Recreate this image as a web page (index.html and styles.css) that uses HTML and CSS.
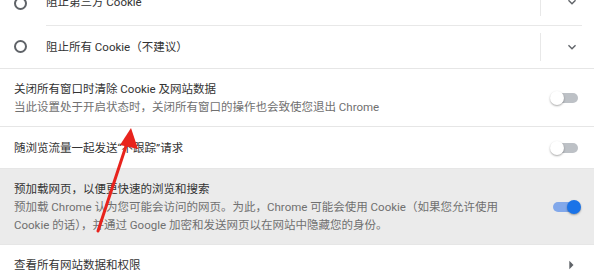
FILE: index.html
```html
<!DOCTYPE html>
<html lang="zh-CN">
<head>
<meta charset="utf-8">
<title>Cookie 设置</title>
<link rel="stylesheet" href="styles.css">
</head>
<body>
<div class="page">
  <div class="card">
    <div class="radio-group">
      <div class="radio-row">
        <span class="radio"></span>
        <div class="radio-body first">
          <span class="label">阻止第三方 Cookie</span>
          <span class="sep"></span>
          <span class="expand">
            <svg width="16" height="16" viewBox="0 0 24 24"><path d="M16.59 8.59L12 13.17 7.41 8.59 6 10l6 6 6-6z" fill="#5f6368"/></svg>
          </span>
        </div>
      </div>
      <div class="radio-row">
        <span class="radio"></span>
        <div class="radio-body">
          <span class="label">阻止所有 Cookie（不建议）</span>
          <span class="sep"></span>
          <span class="expand">
            <svg width="16" height="16" viewBox="0 0 24 24"><path d="M16.59 8.59L12 13.17 7.41 8.59 6 10l6 6 6-6z" fill="#5f6368"/></svg>
          </span>
        </div>
      </div>
    </div>

    <div class="row row-tall">
      <div class="text">
        <div class="primary">关闭所有窗口时清除 Cookie 及网站数据</div>
        <div class="secondary">当此设置处于开启状态时，关闭所有窗口的操作也会致使您退出 Chrome</div>
      </div>
      <span class="toggle"><span class="track"></span><span class="knob"></span></span>
    </div>

    <div class="row row-short">
      <div class="text">
        <div class="primary">随浏览流量一起发送“不跟踪”请求</div>
      </div>
      <span class="toggle"><span class="track"></span><span class="knob"></span></span>
    </div>

    <div class="row row-hover">
      <div class="text narrow">
        <div class="primary">预加载网页，以便更快速的浏览和搜索</div>
        <div class="secondary">预加载 Chrome 认为您可能会访问的网页。为此，Chrome 可能会使用 Cookie（如果您允许使用 Cookie 的话），并通过 Google 加密和发送网页以在网站中隐藏您的身份。</div>
      </div>
      <span class="toggle on"><span class="track"></span><span class="knob"></span></span>
    </div>

    <div class="row row-link">
      <div class="text">
        <div class="primary">查看所有网站数据和权限</div>
      </div>
      <svg class="subpage" width="20" height="20" viewBox="0 0 24 24"><path d="M10 17l5-5-5-5v10z" fill="#5f6368"/></svg>
    </div>
  </div>

  <svg class="annotation" width="594" height="270" viewBox="0 0 594 270">
    <line x1="98" y1="231" x2="127" y2="143" stroke="#e8231d" stroke-width="3" stroke-linecap="round"/>
    <polygon points="131,128 120,145 138,149" fill="#e8231d"/>
  </svg>
</div>
</body>
</html>
```

FILE: styles.css
```css
html, body {
  margin: 0;
  padding: 0;
  background: #ffffff;
}

.page {
  position: relative;
  width: 594px;
  height: 270px;
  overflow: hidden;
  font-family: Roboto, "Noto Sans CJK SC", sans-serif;
  font-size: 11.5px;
  color: #333333;
}

.card {
  margin-top: -21px;
  display: flex;
  flex-direction: column;
}

.radio-group {
  display: flex;
  flex-direction: column;
  padding-right: 12px;
}

.radio-row {
  display: flex;
  align-items: stretch;
  padding-left: 14px;
}

.radio {
  align-self: center;
  width: 13px;
  height: 13px;
  box-sizing: border-box;
  border: 2px solid #5f6368;
  border-radius: 50%;
  flex: none;
}

.radio-row:first-child .radio {
  margin-top: 2px;
}

.radio-body {
  flex: 1;
  margin-left: 19px;
  height: 42px;
  display: flex;
  align-items: center;
  border-top: 1px solid #e8e8e8;
}

.radio-body.first {
  border-top: none;
  height: 46px;
}

.label {
  flex: 1;
  line-height: 18px;
}

.sep {
  width: 1px;
  height: 28px;
  background: #e8e8e8;
  flex: none;
}

.expand {
  width: 41px;
  box-sizing: border-box;
  padding-left: 23px;
  display: flex;
  align-items: center;
  flex: none;
}

.row {
  display: flex;
  align-items: center;
  padding: 0 13px 0 14px;
  border-top: 1px solid #e6e6e6;
  box-sizing: border-box;
}

.row-tall {
  height: 58px;
}

.row-short {
  height: 42px;
}

.row-hover {
  height: 76px;
  background: #ebebeb;
}

.row-link {
  height: 41px;
}

.text {
  flex: 1;
  line-height: 18px;
}

.text.narrow {
  max-width: 490px;
  flex: none;
  margin-right: auto;
}

.primary {
  color: #333333;
}

.secondary {
  color: #707070;
}

.toggle {
  position: relative;
  width: 31px;
  height: 14px;
  flex: none;
}

.track {
  position: absolute;
  left: 3px;
  right: 3px;
  top: 2px;
  bottom: 2px;
  border-radius: 5px;
  background: #bdc1c6;
}

.knob {
  position: absolute;
  left: 0;
  top: 0;
  width: 14px;
  height: 14px;
  border-radius: 50%;
  background: #ffffff;
  box-shadow: 0 1px 2px rgba(0, 0, 0, 0.35);
}

.toggle.on .track {
  background: #82a8ea;
}

.toggle.on .knob {
  left: auto;
  right: 0;
  background: #1a73e8;
}

.subpage {
  flex: none;
}

.annotation {
  position: absolute;
  left: 0;
  top: 0;
  pointer-events: none;
}
```
